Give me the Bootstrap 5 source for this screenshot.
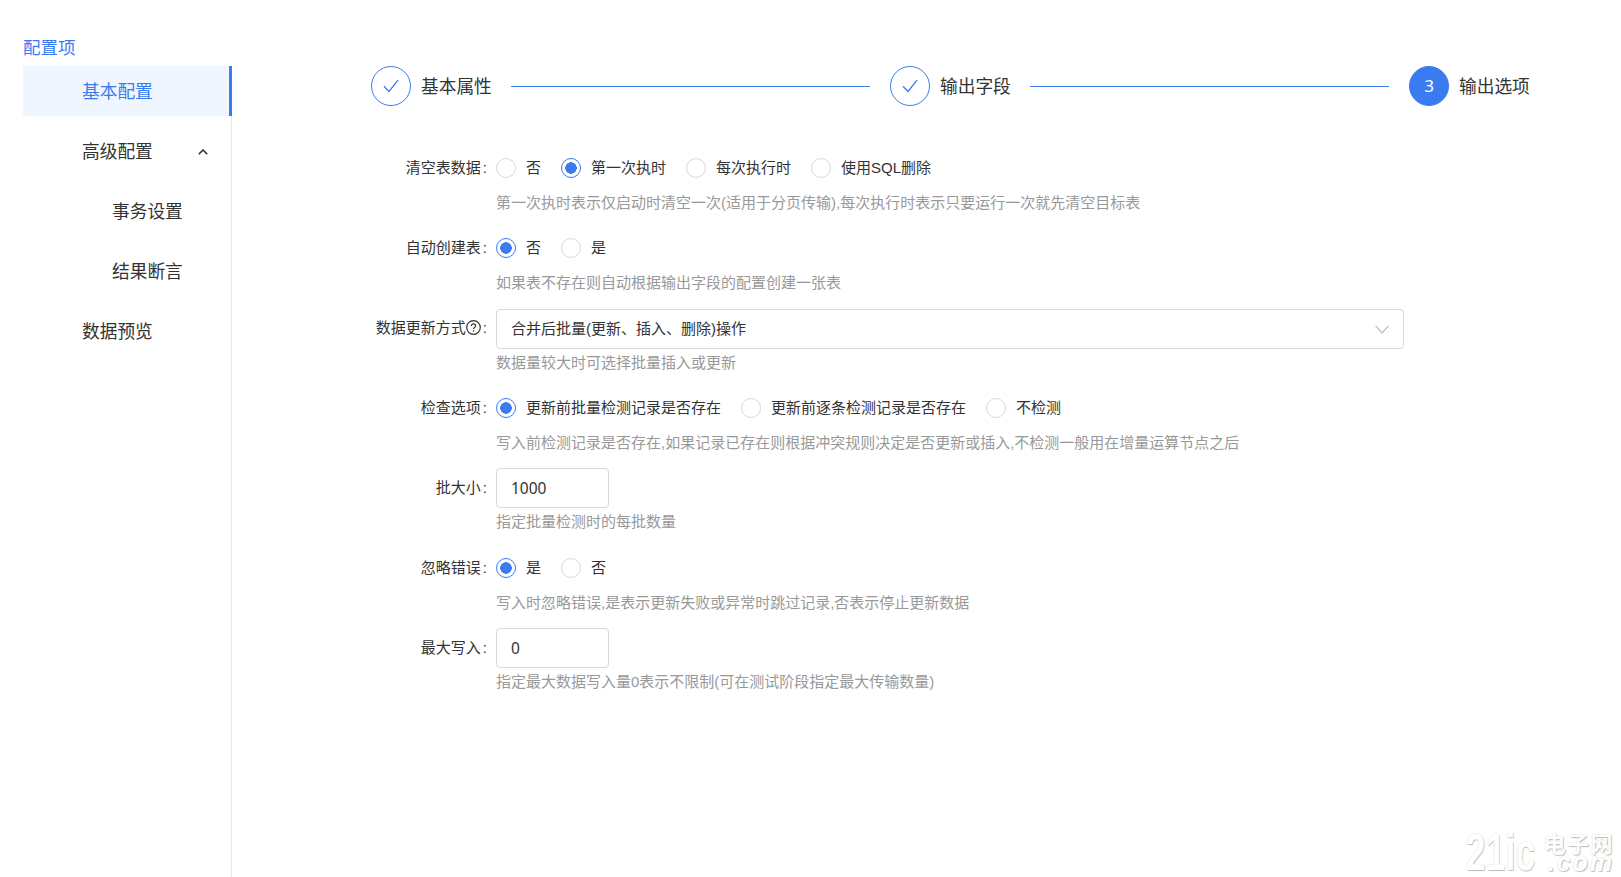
<!DOCTYPE html>
<html lang="zh">
<head>
<meta charset="utf-8">
<title>配置项</title>
<link href="https://cdn.jsdelivr.net/npm/bootstrap@5.3.0/dist/css/bootstrap.min.css" rel="stylesheet">
<style>
html,body{height:100%}
body{font-family:"Liberation Sans","Noto Sans CJK SC",sans-serif;color:#333;background:#fff;overflow:hidden;font-size:15px}
.page-wrap{height:877px;padding-left:23px}
.side-col{width:209px;flex:none}
.side-head{height:60px;padding-top:37px;line-height:22px;font-size:17.5px;color:#3b7bf0}
.side-list{border-right:1px solid #e8e8e8;height:817px}
.side-item{height:50px;margin-bottom:10px;padding:2px 23px 0 59px;font-size:17.7px;color:#333;text-decoration:none;display:flex;align-items:center;justify-content:space-between}
.side-item.on{background:#f0f6ff;color:#3b7bf0;border-right:3px solid #3b7bf0;margin-top:6px;margin-right:-1px}
.side-item.sub{padding-left:89px}
.main-col{margin-left:139px;width:1158px;padding-top:66px}
.step-dot{width:40px;height:40px;border:1px solid #3b7bf0;border-radius:50%;color:#3b7bf0;font-size:18px;flex:none}
.step-dot.cur{background:#3b7bf0;color:#fff;font-family:"Noto Sans",sans-serif;font-size:17px}
.step-name{font-size:17.7px;height:40px;line-height:42px;margin-left:10px;width:70px;white-space:nowrap;color:#333}
.step-line{flex:1;height:1px;background:#3b7bf0;margin:0 20px}
.form-area{margin-top:42px;width:1033px}
.fm-row{height:70px;margin-bottom:10px}
.fm-label{width:125px;flex:none;height:40px;line-height:40px;padding-right:8px;text-align:right;white-space:nowrap;color:#333}
.colon-mark{margin-left:2px;margin-right:1px}
.fm-body{flex:1;min-width:0}
.fm-line{height:40px;gap:20px}
.fm-hint{line-height:30px;color:#999;white-space:nowrap}
.fm-hint.snug{line-height:28px}
.fm-hint.after-sel{line-height:29px;margin-top:-1px}
.radio-opt{gap:10px;margin:0;color:#333;line-height:40px}
.radio-opt .form-check-input{width:20px;height:20px;margin:0;border:1px solid #d9d9d9;float:none;background-color:#fff;box-shadow:none}
.radio-opt .form-check-input:checked{border-color:#3b7bf0;background-color:#fff;background-image:radial-gradient(circle,#3b7bf0 0,#3b7bf0 5.5px,#fff 6px)}
.num-box{width:113px;height:40px;border:1px solid #d9d9d9;border-radius:4px;padding:0 14px;color:#333;font-family:"Noto Sans",sans-serif;font-size:15.5px;box-shadow:none}
.sel-box{height:40px;margin-top:1px;border:1px solid #d9d9d9;border-radius:4px;padding:0 14px;color:#333}
.help-mark{width:15px;height:15px;vertical-align:-2px}
.water-mark{position:absolute;right:7px;bottom:4px;color:#fff;display:flex;align-items:center;gap:8px;text-shadow:1px 1px 1px #bdbdbd,0 0 1px #cdcdcd;user-select:none}
.wm-big{font-size:51px;font-weight:700;line-height:40px;transform:scaleX(.7);transform-origin:right center;margin-left:-29px}
.wm-cn{font-size:22px;line-height:18px;font-weight:700;letter-spacing:1.5px}
.wm-en{font-size:25px;line-height:16px;font-weight:700;font-style:italic;letter-spacing:2px}
</style>
</head>
<body class="position-relative">
<div class="page-wrap d-flex">
  <aside class="side-col">
    <div class="side-head">配置项</div>
    <nav class="side-list">
      <a class="side-item on" href="#">基本配置</a>
      <a class="side-item" href="#">高级配置
        <svg width="10" height="6" viewBox="0 0 10 6" fill="none" stroke="#333" stroke-width="1.6"><path d="M.8 5.2 5 1l4.2 4.2"/></svg>
      </a>
      <a class="side-item sub" href="#">事务设置</a>
      <a class="side-item sub" href="#">结果断言</a>
      <a class="side-item" href="#">数据预览</a>
    </nav>
  </aside>
  <main class="main-col">
    <div class="d-flex align-items-center">
      <span class="step-dot d-flex align-items-center justify-content-center"><svg width="16" height="14" viewBox="0 0 16 14" fill="none" stroke="#3b7bf0" stroke-width="1.3"><path d="M1 7.2 6 12.4 15 1.2"/></svg></span>
      <span class="step-name">基本属性</span>
      <span class="step-line"></span>
      <span class="step-dot d-flex align-items-center justify-content-center"><svg width="16" height="14" viewBox="0 0 16 14" fill="none" stroke="#3b7bf0" stroke-width="1.3"><path d="M1 7.2 6 12.4 15 1.2"/></svg></span>
      <span class="step-name">输出字段</span>
      <span class="step-line"></span>
      <span class="step-dot cur d-flex align-items-center justify-content-center">3</span>
      <span class="step-name">输出选项</span>
    </div>
    <form class="form-area">
      <div class="fm-row d-flex">
        <label class="fm-label">清空表数据<span class="colon-mark">:</span></label>
        <div class="fm-body">
          <div class="fm-line d-flex align-items-center">
            <label class="radio-opt d-flex align-items-center"><input class="form-check-input" type="radio" name="r1">否</label>
            <label class="radio-opt d-flex align-items-center"><input class="form-check-input" type="radio" name="r1" checked>第一次执时</label>
            <label class="radio-opt d-flex align-items-center"><input class="form-check-input" type="radio" name="r1">每次执行时</label>
            <label class="radio-opt d-flex align-items-center"><input class="form-check-input" type="radio" name="r1">使用SQL删除</label>
          </div>
          <div class="fm-hint">第一次执时表示仅启动时清空一次(适用于分页传输),每次执行时表示只要运行一次就先清空目标表</div>
        </div>
      </div>
      <div class="fm-row d-flex">
        <label class="fm-label">自动创建表<span class="colon-mark">:</span></label>
        <div class="fm-body">
          <div class="fm-line d-flex align-items-center">
            <label class="radio-opt d-flex align-items-center"><input class="form-check-input" type="radio" name="r2" checked>否</label>
            <label class="radio-opt d-flex align-items-center"><input class="form-check-input" type="radio" name="r2">是</label>
          </div>
          <div class="fm-hint">如果表不存在则自动根据输出字段的配置创建一张表</div>
        </div>
      </div>
      <div class="fm-row d-flex">
        <label class="fm-label">数据更新方式<svg class="help-mark" viewBox="0 0 15 15" fill="none" stroke="#333" stroke-width="1.2"><circle cx="7.5" cy="7.5" r="6.8"/><path d="M5.4 5.9c0-1.3 1-2 2.1-2s2.1.8 2.1 1.9c0 1.6-2.1 1.6-2.1 3.3"/><path d="M7.5 10.2v1.4"/></svg><span class="colon-mark">:</span></label>
        <div class="fm-body">
          <div class="sel-box d-flex align-items-center justify-content-between">
            <span>合并后批量(更新、插入、删除)操作</span>
            <svg width="14" height="9" viewBox="0 0 14 9" fill="none" stroke="#bdbdbd" stroke-width="1.2"><path d="M.6.8 7 8 13.4.8"/></svg>
          </div>
          <div class="fm-hint after-sel">数据量较大时可选择批量插入或更新</div>
        </div>
      </div>
      <div class="fm-row d-flex">
        <label class="fm-label">检查选项<span class="colon-mark">:</span></label>
        <div class="fm-body">
          <div class="fm-line d-flex align-items-center">
            <label class="radio-opt d-flex align-items-center"><input class="form-check-input" type="radio" name="r3" checked>更新前批量检测记录是否存在</label>
            <label class="radio-opt d-flex align-items-center"><input class="form-check-input" type="radio" name="r3">更新前逐条检测记录是否存在</label>
            <label class="radio-opt d-flex align-items-center"><input class="form-check-input" type="radio" name="r3">不检测</label>
          </div>
          <div class="fm-hint">写入前检测记录是否存在,如果记录已存在则根据冲突规则决定是否更新或插入,不检测一般用在增量运算节点之后</div>
        </div>
      </div>
      <div class="fm-row d-flex">
        <label class="fm-label">批大小<span class="colon-mark">:</span></label>
        <div class="fm-body">
          <input class="form-control num-box" value="1000">
          <div class="fm-hint snug">指定批量检测时的每批数量</div>
        </div>
      </div>
      <div class="fm-row d-flex">
        <label class="fm-label">忽略错误<span class="colon-mark">:</span></label>
        <div class="fm-body">
          <div class="fm-line d-flex align-items-center">
            <label class="radio-opt d-flex align-items-center"><input class="form-check-input" type="radio" name="r4" checked>是</label>
            <label class="radio-opt d-flex align-items-center"><input class="form-check-input" type="radio" name="r4">否</label>
          </div>
          <div class="fm-hint">写入时忽略错误,是表示更新失败或异常时跳过记录,否表示停止更新数据</div>
        </div>
      </div>
      <div class="fm-row d-flex">
        <label class="fm-label">最大写入<span class="colon-mark">:</span></label>
        <div class="fm-body">
          <input class="form-control num-box" value="0">
          <div class="fm-hint snug">指定最大数据写入量0表示不限制(可在测试阶段指定最大传输数量)</div>
        </div>
      </div>
    </form>
  </main>
</div>
<div class="water-mark">
  <span class="wm-big">21ic</span>
  <span class="d-flex flex-column align-items-end"><span class="wm-cn">电子网</span><span class="wm-en">.com</span></span>
</div>
<script src="https://cdn.jsdelivr.net/npm/bootstrap@5.3.0/dist/js/bootstrap.bundle.min.js"></script>
</body>
</html>
